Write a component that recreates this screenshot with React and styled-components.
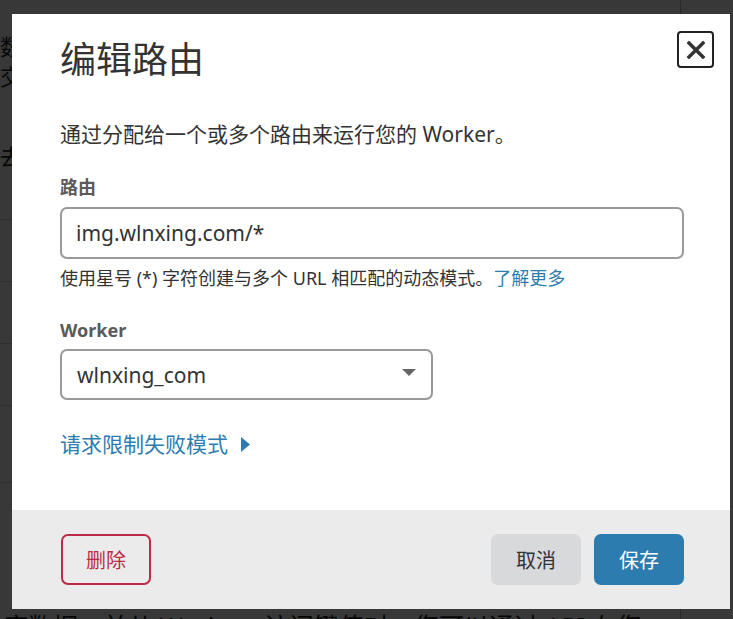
import React from 'react'
import styled, { createGlobalStyle } from 'styled-components'

const GlobalStyle = createGlobalStyle`
  html, body {
    margin: 0;
    padding: 0;
  }
  body {
    font-family: "Noto Sans", "Noto Sans CJK SC", sans-serif;
    background: #ffffff;
    color: #333;
  }
`

const rows = [
  { text: '数据', h: 30 },
  { text: '交互', h: 30 },
  { text: '', h: 50 },
  { text: '去除', h: 30 },
]

const App = () => {
  return (
    <>
      <GlobalStyle />
      <BgPage>
        <BgPanel>
          <BgTop />
          {rows.map((r, i) => (
            <BgLine key={i} $h={r.h}>{r.text}</BgLine>
          ))}
          <BgTable>
            {[61, 61, 61, 76, 27].map((h, i) => (
              <BgRow key={i} $h={h} />
            ))}
          </BgTable>
          <BgText>序数据，并从 Workers 访问键值对。您可以通过 API 在您</BgText>
        </BgPanel>
      </BgPage>

      <Overlay>
        <Modal>
          <Body>
            <Header>
              <Title>编辑路由</Title>
              <CloseButton aria-label="关闭">
                <svg width="18" height="18" viewBox="0 0 18 18">
                  <path d="M2 2 L16 16 M16 2 L2 16" stroke="#333" strokeWidth="3.4" strokeLinecap="square" />
                </svg>
              </CloseButton>
            </Header>

            <Intro>通过分配给一个或多个路由来运行您的 Worker。</Intro>

            <Label>路由</Label>
            <Field>img.wlnxing.com/*</Field>
            <Help>
              使用星号 (*) 字符创建与多个 URL 相匹配的动态模式。<HelpLink>了解更多</HelpLink>
            </Help>

            <Label $top={27}>Worker</Label>
            <SelectBox>
              <span>wlnxing_com</span>
              <svg width="14" height="8" viewBox="0 0 14 8">
                <path d="M0 0 L14 0 L7 7 Z" fill="#666" />
              </svg>
            </SelectBox>

            <Toggle>
              请求限制失败模式
              <svg width="9" height="15" viewBox="0 0 9 15">
                <path d="M0 0 L9 7.5 L0 15 Z" fill="#2c7cb0" />
              </svg>
            </Toggle>
          </Body>

          <Footer>
            <Button $variant="danger">删除</Button>
            <Actions>
              <Button $variant="plain">取消</Button>
              <Button $variant="primary">保存</Button>
            </Actions>
          </Footer>
        </Modal>
      </Overlay>
    </>
  )
}

export default App

const BgPage = styled.div`
  width: 733px;
  height: 619px;
  overflow: hidden;
  background: #ffffff;
`

const BgPanel = styled.div`
  width: 680px;
  height: 100%;
  border-right: 1px solid #bbb;
  display: flex;
  flex-direction: column;
`

const BgTop = styled.div`
  height: 30px;
  flex-shrink: 0;
`

const BgLine = styled.div`
  flex-shrink: 0;
  height: ${p => p.$h}px;
  font-size: 22px;
  line-height: 30px;
  color: #222;
  white-space: nowrap;
  font-family: "Noto Sans CJK SC", sans-serif;
`

const BgTable = styled.div`
  flex-shrink: 0;
  margin-top: 49px;
  display: flex;
  flex-direction: column;
`

const BgRow = styled.div`
  height: ${p => p.$h}px;
  border-top: 1px solid #d5d5d5;
`

const BgText = styled.div`
  flex-shrink: 0;
  margin-top: 101px;
  padding-left: 3px;
  font-size: 25px;
  line-height: 30px;
  color: #222;
  white-space: nowrap;
`

const Overlay = styled.div`
  position: fixed;
  inset: 0;
  background: rgba(0, 0, 0, 0.78);
`

const Modal = styled.div`
  position: absolute;
  top: 14px;
  left: 12px;
  width: 718px;
  height: 595px;
  background: #ffffff;
  display: flex;
  flex-direction: column;
`

const Body = styled.div`
  flex: 1;
  padding: 17px 46px 0 48px;
  display: flex;
  flex-direction: column;
  align-items: flex-start;
`

const Header = styled.div`
  width: calc(100% + 30px);
  display: flex;
  justify-content: space-between;
  align-items: flex-start;
`

const Title = styled.h1`
  margin: 7px 0 0;
  font-size: 36px;
  line-height: 43px;
  font-weight: 400;
  color: #333;
`

const CloseButton = styled.button`
  width: 37px;
  height: 37px;
  padding: 0;
  border: 2px solid #222;
  border-radius: 4px;
  background: #fff;
  display: flex;
  align-items: center;
  justify-content: center;
  cursor: pointer;
`

const Intro = styled.p`
  margin: 38px 0 0;
  font-size: 21px;
  line-height: 31px;
  color: #333;
`

const Label = styled.div`
  margin-top: ${p => p.$top ?? 25}px;
  font-size: 18px;
  line-height: 25px;
  font-weight: 700;
  color: #5a5a5a;
`

const Field = styled.div`
  box-sizing: border-box;
  margin-top: 7px;
  width: 100%;
  height: 52px;
  padding: 0 14px;
  border: 2px solid #999;
  border-radius: 7px;
  display: flex;
  align-items: center;
  font-size: 21px;
  color: #333;
`

const Help = styled.div`
  margin-top: 7px;
  font-size: 18px;
  line-height: 25px;
  color: #333;
`

const HelpLink = styled.a`
  color: #2c7cb0;
  text-decoration: none;
`

const SelectBox = styled.div`
  box-sizing: border-box;
  margin-top: 6px;
  width: 373px;
  height: 51px;
  padding: 0 15px 0 15px;
  border: 2px solid #999;
  border-radius: 7px;
  display: flex;
  align-items: center;
  justify-content: space-between;
  font-size: 21px;
  color: #333;

  svg {
    margin-top: -4px;
  }
`

const Toggle = styled.a`
  margin-top: 29px;
  display: flex;
  align-items: center;
  gap: 13px;
  font-size: 21px;
  line-height: 31px;
  color: #2c7cb0;
  cursor: pointer;
`

const Footer = styled.div`
  flex-shrink: 0;
  height: 99px;
  padding: 0 46px 0 49px;
  background: #ebebeb;
  display: flex;
  align-items: center;
  justify-content: space-between;
`

const Actions = styled.div`
  display: flex;
  gap: 13px;
`

const variants = {
  danger: 'background: transparent; color: #bc2b45; border: 2px solid #bc2b45;',
  plain: 'background: #d8d9db; color: #333; border: 2px solid #d8d9db;',
  primary: 'background: #2c7cb0; color: #fff; border: 2px solid #2c7cb0;',
}

const Button = styled.button`
  box-sizing: border-box;
  height: 51px;
  min-width: 90px;
  padding: 0 18px;
  border-radius: 7px;
  font-family: "Noto Sans CJK SC", sans-serif;
  font-size: 20px;
  cursor: pointer;
  ${p => variants[p.$variant]}
`
